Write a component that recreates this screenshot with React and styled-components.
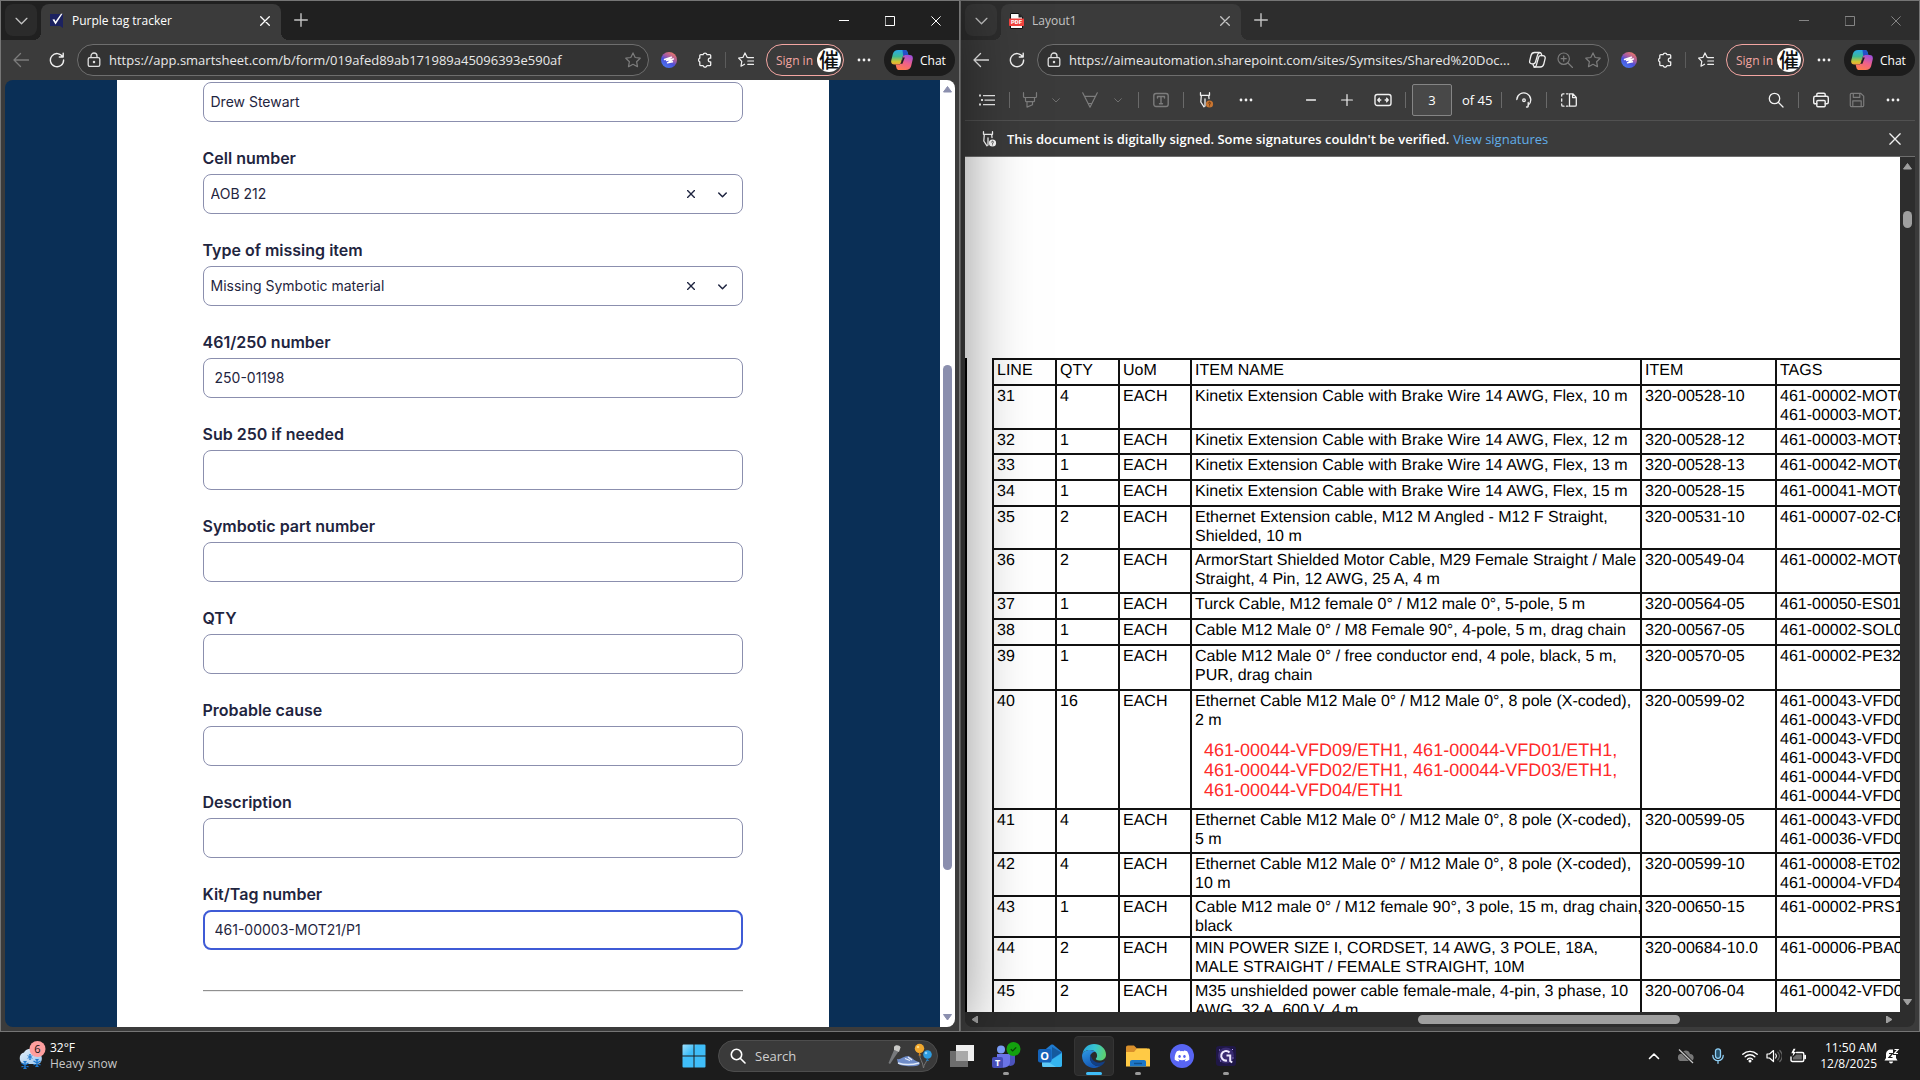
import React from "react";
import styled, { createGlobalStyle, css } from "styled-components";
import { FaDiscord } from "react-icons/fa";

const uiFont = `"Segoe UI", "Open Sans", "Noto Sans", sans-serif`;

const GlobalStyle = createGlobalStyle`
	* {
		box-sizing: border-box;
	}

	body {
		margin: 0;
		background: #1c1c1c;
		font-family: ${uiFont};
		font-size: 12px;
		color: #fff;
	}

	button,
	input,
	select {
		margin: 0;
		padding: 0;
		border: 0;
		background: none;
		color: inherit;
		font: inherit;
		outline: none;
	}

	svg {
		display: block;
		flex: none;
	}
`;

/* ---------- desktop ---------- */

const Desktop = styled.div`
	display: flex;
	flex-direction: column;
	height: 100vh;
	overflow: hidden;
`;

const Windows = styled.main`
	flex: 1;
	min-height: 0;
	display: grid;
	grid-template-columns: 1fr 1fr;
`;

const Window = styled.section`
	position: relative;
	display: flex;
	flex-direction: column;
	min-width: 0;
	min-height: 0;
	border: 1px solid #757575;
	background: #3b3b3b;
	${(p) =>
		p.$active &&
		css`
			z-index: 1;
			box-shadow: 0 0 64px rgba(0, 0, 0, 0.5);
		`}
`;

const WindowBody = styled.div`
	flex: 1;
	min-height: 0;
	margin: 0 4px 4px;
	display: flex;
	flex-direction: column;
	border-radius: 8px;
	overflow: hidden;
`;

/* ---------- browser chrome ---------- */

const TabStrip = styled.div`
	display: flex;
	align-items: flex-end;
	gap: 4px;
	height: 39px;
	padding-left: 4px;
	background: ${(p) => (p.$active ? "#202020" : "#2d2d2d")};
	color: ${(p) => (p.$active ? "#fff" : "#c4c4c4")};
`;

const StripButton = styled.button`
	display: flex;
	align-items: center;
	justify-content: center;
	width: 32px;
	height: 32px;
	margin-bottom: 4px;
	border-radius: 8px;
	background: ${(p) => (p.$filled ? "rgba(255, 255, 255, 0.05)" : "none")};
	color: #c4c4c4;
`;

const Tab = styled.div`
	position: relative;
	display: flex;
	align-items: center;
	width: 240px;
	height: 36px;
	padding: 0 8px 3px;
	border-radius: 8px 8px 0 0;
	background: #3b3b3b;

	&::before,
	&::after {
		content: "";
		position: absolute;
		bottom: 0;
		width: 8px;
		height: 8px;
	}

	&::before {
		left: -8px;
		background: radial-gradient(circle at 0 0, transparent 8px, #3b3b3b 8px);
	}

	&::after {
		right: -8px;
		background: radial-gradient(circle at 100% 0, transparent 8px, #3b3b3b 8px);
	}
`;

const TabTitle = styled.span`
	flex: 1;
	margin-left: 8px;
	line-height: 16px;
`;

const TabClose = styled.button`
	display: flex;
	align-items: center;
	justify-content: center;
	width: 16px;
	height: 16px;
`;

const WindowControls = styled.div`
	display: flex;
	align-self: stretch;
	margin-left: auto;
	color: ${(p) => (p.$active ? "#fff" : "#858585")};
`;

const WindowControl = styled.button`
	display: flex;
	align-items: center;
	justify-content: center;
	width: 46px;
`;

const Toolbar = styled.div`
	display: flex;
	align-items: center;
	gap: 4px;
	height: 40px;
	padding: 0 4px;
`;

const IconButton = styled.button`
	display: flex;
	align-items: center;
	justify-content: center;
	flex: none;
	width: ${(p) => p.$width || 32}px;
	height: 32px;
	color: ${(p) => (p.$dim ? "#7c7c7c" : "#f0f0f0")};
`;

const AddressBar = styled.div`
	flex: 1;
	min-width: 0;
	display: flex;
	align-items: center;
	gap: 4px;
	height: 32px;
	padding-right: 3px;
	border: 1px solid #6e6e6e;
	border-radius: 16px;
	background: #333;
`;

const SiteInfo = styled.button`
	display: flex;
	align-items: center;
	justify-content: center;
	width: 27px;
	margin-left: 2px;
	margin-right: -2px;
	color: #e0e0e0;
`;

const AddressInput = styled.input`
	flex: 1;
	min-width: 0;
	font-size: 13px;
	line-height: 20px;
	color: #e8e8e8;
`;

const ToolbarDivider = styled.span`
	width: 1px;
	height: 16px;
	background: #5c5c5c;
`;

const SignIn = styled.button`
	display: flex;
	align-items: center;
	justify-content: space-between;
	width: 78px;
	height: 32px;
	padding: 0 2px 0 9px;
	border: 1px solid #f3a6a2;
	border-radius: 16px;
	color: #f3a6a2;
`;

const Avatar = styled.span`
	display: flex;
	align-items: center;
	justify-content: center;
	width: 24px;
	height: 24px;
	border-radius: 50%;
	background: #fff;
	color: #111;
	font: 500 20px/24px "Noto Sans CJK SC", sans-serif;
`;

const ChatButton = styled.button`
	display: flex;
	align-items: center;
	gap: 7px;
	width: 71px;
	height: 32px;
	padding-left: 7px;
	border-radius: 16px;
	background: #1c1c1c;
`;

/* ---------- scroll bars ---------- */

const ScrollTrack = styled.div`
	display: flex;
	flex: none;
	align-items: center;
	justify-content: space-between;
	background: ${(p) => (p.$dark ? "#2d2d2d" : "#fff")};
	color: ${(p) => (p.$dark ? "#9f9f9f" : "#8b8fae")};
	${(p) =>
		p.$horizontal
			? "height: 15px; padding: 0 6px;"
			: "width: 15px; padding: 6px 0; flex-direction: column;"}
	${(p) => p.$corner && "margin-bottom: 15px;"}
`;

const ScrollRoom = styled.div`
	flex: ${(p) => p.$share};
`;

const ScrollThumb = styled.div`
	flex: ${(p) => p.$share};
	${(p) => (p.$horizontal ? "height: 9px;" : "width: 9px;")}
	border-radius: 5px;
	background: currentColor;
`;

const arrowPaths = {
	up: "M4.5 0.5 8.5 6H0.5Z",
	down: "M4.5 6 8.5 0.5H0.5Z",
	left: "M1 3.5 6.5 0v7Z",
	right: "M7 3.5 1.5 0v7Z",
};

const ScrollArrow = ({ to }) => (
	<svg width="9" height="7" viewBox="0 0 9 7">
		<path
			d={arrowPaths[to]}
			fill="currentColor"
			stroke="currentColor"
			strokeLinejoin="round"
		/>
	</svg>
);

const ScrollBar = ({ horizontal, dark, corner, before, size, after }) => (
	<ScrollTrack $horizontal={horizontal} $dark={dark} $corner={corner}>
		<ScrollArrow to={horizontal ? "left" : "up"} />
		<ScrollRoom $share={before} />
		<ScrollThumb $horizontal={horizontal} $share={size} />
		<ScrollRoom $share={after} />
		<ScrollArrow to={horizontal ? "right" : "down"} />
	</ScrollTrack>
);

/* ---------- form ---------- */

const FormPane = styled.div`
	flex: 1;
	min-height: 0;
	display: flex;
`;

const FormBackdrop = styled.div`
	flex: 1;
	min-width: 0;
	display: flex;
	justify-content: center;
	background: #0a2f56;
	overflow: hidden;
`;

const Sheet = styled.form`
	flex: 0 1 712px;
	padding: 2px 86px 0;
	background: #fff;
	color: #1f2540;
	font-family: Inter, sans-serif;
	font-size: 14px;
`;

const Field = styled.div`
	display: flex;
	flex-direction: column;
	gap: 4px;
	margin-bottom: 24px;
`;

const Label = styled.label`
	font-size: 16px;
	font-weight: 600;
	line-height: 24px;
`;

const box = css`
	height: 40px;
	border: 1px solid #8b8fae;
	border-radius: 8px;
`;

const TextInput = styled.input`
	${box}
	width: 100%;
	padding: 0 ${(p) => (p.$tight ? 7 : 11)}px 2px;
	${(p) => p.$focused && "border: 2px solid #3f5bd6; padding: 0 10px 2px;"}
`;

const SelectBox = styled.div`
	${box}
	display: flex;
	align-items: center;
	padding: 0 11px 0 7px;
`;

const Select = styled.select`
	flex: 1;
	height: 100%;
	padding-bottom: 2px;
	appearance: none;
`;

const SelectButton = styled.button`
	display: flex;
	align-items: center;
	justify-content: center;
	width: ${(p) => p.$width}px;
	height: 24px;
`;

const Rule = styled.hr`
	height: 2px;
	margin: 40px 0 0;
	border: 0;
	border-top: 1px solid #909090;
	border-bottom: 1px solid #ececec;
`;

/* ---------- pdf viewer ---------- */

const PdfToolbar = styled.div`
	display: grid;
	grid-template-columns: 1fr auto 1fr;
	align-items: center;
	height: 41px;
	padding: 0 6px;
	border-bottom: 1px solid #515151;
`;

const ToolGroup = styled.div`
	display: flex;
	align-items: center;
	justify-content: ${(p) => (p.$end ? "flex-end" : "flex-start")};
	gap: ${(p) => p.$gap || 0}px;
`;

const Separator = styled.span`
	width: 1px;
	height: 16px;
	margin: 0 6px;
	background: #6a6a6a;
`;

const PageInput = styled.input`
	width: 40px;
	height: 32px;
	border: 1px solid #858585;
	border-radius: 2px;
	background: #484848;
	text-align: center;
	font-size: 13px;
`;

const PageCount = styled.span`
	width: 43px;
	padding-left: 10px;
	font-size: 13px;
	white-space: nowrap;
`;

const Notice = styled.div`
	display: flex;
	align-items: center;
	height: 36px;
	padding: 0 4px 0 10px;
	border-bottom: 1px solid #6e6e6e;
	font-size: 13px;
	font-weight: 600;
	white-space: nowrap;
`;

const NoticeText = styled.span`
	margin-left: 8px;
`;

const NoticeLink = styled.a`
	margin-left: 4px;
	margin-right: auto;
	color: #61aee9;
	font-weight: 400;
	text-decoration: none;
`;

const PdfView = styled.div`
	flex: 1;
	min-height: 0;
	display: flex;
	background: #2d2d2d;
`;

const PdfColumn = styled.div`
	flex: 1;
	min-width: 0;
	display: flex;
	flex-direction: column;
`;

const Page = styled.div`
	flex: 1;
	min-height: 0;
	display: flex;
	align-items: flex-start;
	padding-top: 201px;
	background: #fff;
	overflow: hidden;
`;

const PageEdge = styled.div`
	flex: none;
	align-self: stretch;
	width: 2px;
	margin-right: 25px;
	background: #000;
`;

const PartsTable = styled.table`
	flex: none;
	width: 1080px;
	table-layout: fixed;
	border-collapse: collapse;
	color: #000;
	font: 16px/19px "Liberation Sans", Arial, sans-serif;
	text-rendering: geometricPrecision;
`;

const Row = styled.tr`
	height: ${(p) => p.$height}px;
`;

const cell = css`
	padding: 1px 0 0 3px;
	border: 2px solid #111;
	font-weight: 400;
	text-align: left;
	vertical-align: top;
	white-space: pre;
`;

const Cell = styled.td`
	${cell}
`;

const HeadCell = styled.th`
	${cell}
`;

const Annotation = styled.div`
	margin: 10px 0 0 9px;
	color: #ff2a2a;
	font-size: 18px;
	line-height: 20px;
`;

/* ---------- task bar ---------- */

const TaskBar = styled.footer`
	position: relative;
	z-index: 2;
	display: grid;
	grid-template-columns: 1fr auto 1fr;
	align-items: center;
	height: 48px;
	background: #1c1c1c;
	line-height: 16px;
`;

const Weather = styled.button`
	display: flex;
	align-items: center;
	gap: 4px;
	justify-self: start;
	margin-left: 18px;
	text-align: left;
`;

const Muted = styled.div`
	color: #c8c8c8;
`;

const Apps = styled.div`
	display: flex;
	align-items: center;
`;

const AppButton = styled.button`
	position: relative;
	display: flex;
	align-items: center;
	justify-content: center;
	width: 44px;
	height: 48px;
	${(p) =>
		p.$active &&
		css`
			width: 40px;
			height: 40px;
			margin: 0 2px;
			border: 1px solid #353535;
			border-radius: 4px;
			background: #2b2b2b;
		`}
`;

const Indicator = styled.span`
	position: absolute;
	bottom: ${(p) => (p.$active ? 0 : 5)}px;
	width: ${(p) => (p.$active ? 16 : 6)}px;
	height: 3px;
	border-radius: 2px;
	background: ${(p) => (p.$active ? "#3fbdf8" : "#9a9a9a")};
`;

const SearchBox = styled.label`
	display: flex;
	align-items: center;
	width: 220px;
	height: 32px;
	margin: 0 2px;
	padding: 0 5px 0 11px;
	border: 1px solid #4d4d4d;
	border-radius: 16px;
	background: #3a3a3a;
`;

const SearchInput = styled.input`
	flex: 1;
	min-width: 0;
	margin-left: 9px;
	font-size: 13px;

	&::placeholder {
		color: #cfcfcf;
		opacity: 1;
	}
`;

const Tray = styled.div`
	display: flex;
	align-items: center;
	justify-self: end;
	padding-right: 16px;
`;

const TrayButton = styled.button`
	display: flex;
	align-items: center;
	justify-content: center;
	width: ${(p) => p.$width || 32}px;
	height: 40px;
`;

const Clock = styled.button`
	width: 66px;
	padding-right: 3px;
	text-align: right;
	white-space: nowrap;
`;

/* ---------- icons ---------- */

const Line = ({ size = 16, w = 1.2, children, ...rest }) => (
	<svg
		width={size}
		height={size}
		viewBox={`0 0 ${size} ${size}`}
		fill="none"
		stroke="currentColor"
		strokeWidth={w}
		strokeLinecap="round"
		strokeLinejoin="round"
		{...rest}
	>
		{children}
	</svg>
);

const ChevronIcon = ({ size = 12, up, w = 1.2 }) => (
	<Line size={12} w={w} width={size} height={size}>
		<path d={up ? "M1.5 8.5 6 4l4.5 4.5" : "M1 4l5 5 5-5"} />
	</Line>
);

const CrossIcon = ({ size = 10, w = 1.2 }) => (
	<Line size={10} w={w} width={size} height={size}>
		<path d="M.7.7l8.6 8.6M9.3.7.7 9.3" />
	</Line>
);

const PlusIcon = ({ size = 14, w = 1.4 }) => (
	<Line size={14} w={w} width={size} height={size}>
		<path d="M7 .7v12.6M.7 7h12.6" />
	</Line>
);

const BackIcon = () => (
	<Line w={1.3}>
		<path d="M7.5 1.5 1 8l6.5 6.5M1 8h14.5" />
	</Line>
);

const RefreshIcon = () => (
	<Line w={1.4}>
		<path d="M13.8 5A6.6 6.6 0 1 0 14.6 8M14.2 1.2V5h-3.9" />
	</Line>
);

const LockIcon = () => (
	<Line w={1.3}>
		<rect x="2.2" y="5.6" width="11.6" height="8.8" rx="1.6" />
		<path d="M5 5.4V4a3 3 0 0 1 6 0v1.4" />
		<circle cx="8" cy="10" r=".6" fill="currentColor" />
	</Line>
);

const StarIcon = () => (
	<Line w={1.2}>
		<path d="M8 .9l2.2 4.6 5 .7-3.6 3.5.9 5L8 12.3l-4.5 2.4.9-5L.8 6.2l5-.7Z" />
	</Line>
);

const FavoritesIcon = () => (
	<Line w={1.2}>
		<path d="M9.6 5.4H9.2L7 .9 4.9 5.4.6 6l3.2 3.3-.8 4.9 3.6-2M9.8 5.6h5.7M9.8 9h5.7M9.8 12.4h5.7" />
	</Line>
);

const PuzzleIcon = () => (
	<Line w={1.3}>
		<path d="M3.8 2.6h2.3a2 2 0 0 1 3.9 0h2.7c.6 0 1 .4 1 1v2.6h-1a1.9 1.9 0 0 0 0 3.7h1v2.8c0 .6-.4 1-1 1H10a2 2 0 0 1-3.9 0H3.8c-.6 0-1-.4-1-1V9.9a2 2 0 0 1 0-3.7V3.6c0-.6.4-1 1-1Z" />
	</Line>
);

const DotsIcon = () => (
	<svg width="14" height="4" viewBox="0 0 14 4" fill="currentColor">
		<circle cx="2" cy="2" r="1.4" />
		<circle cx="7" cy="2" r="1.4" />
		<circle cx="12" cy="2" r="1.4" />
	</svg>
);

const ExtensionIcon = () => (
	<svg width="16" height="16" viewBox="0 0 16 16">
		<defs>
			<linearGradient id="ext" x1="0.8" y1="0" x2="0.2" y2="1">
				<stop offset="0" stopColor="#f47c62" />
				<stop offset=".4" stopColor="#a05aa8" />
				<stop offset=".6" stopColor="#4a50dc" />
				<stop offset="1" stopColor="#4b7df2" />
			</linearGradient>
		</defs>
		<circle cx="8" cy="8" r="8" fill="url(#ext)" />
		<path
			d="M3.5 7.5 10.5 5.2 5.5 8.5 12.5 7 6.5 10.8 11.5 9.8"
			fill="none"
			stroke="#fff"
			strokeWidth="1.4"
			strokeLinejoin="round"
			strokeLinecap="round"
		/>
	</svg>
);

const CopilotIcon = () => (
	<svg width="22" height="20" viewBox="0 0 22 20">
		<defs>
			<linearGradient id="copA" x1="0" y1="0" x2="0" y2="1">
				<stop offset="0" stopColor="#2aa8ea" />
				<stop offset=".45" stopColor="#3fb994" />
				<stop offset=".8" stopColor="#d2c62f" />
				<stop offset="1" stopColor="#f2a53a" />
			</linearGradient>
			<linearGradient id="copB" x1=".7" y1="0" x2=".3" y2="1">
				<stop offset="0" stopColor="#a04fd8" />
				<stop offset=".5" stopColor="#f0608a" />
				<stop offset="1" stopColor="#ff7d4d" />
			</linearGradient>
		</defs>
		<path
			d="M7.2 0h6.6c1.4 0 2.3.8 2.7 2.1l.9 3h-3.2c-1.4 0-2.2.8-2.6 2.1l-1.8 5.6c-.4 1.2-1.1 1.8-2.3 1.8H3.3C.9 14.6-.3 12.8.3 10.3l1.6-6.5C2.6 1.4 4.4 0 7.2 0Z"
			fill="url(#copA)"
		/>
		<path d="M11.5 0h2.3c1.4 0 2.3.8 2.7 2.1l.9 3h-3.2c-.9 0-1.6.4-2 1Z" fill="#2350c8" />
		<path
			d="M14.8 20H8.2c-1.4 0-2.3-.8-2.7-2.1l-.9-3.3h3c1.3 0 2-.6 2.4-1.8l1.8-5.6c.4-1.3 1.2-2.1 2.6-2.1h4.3c2.4 0 3.6 1.8 3 4.3l-1.6 6.8c-.7 2.4-2.5 3.8-5.3 3.8Z"
			fill="url(#copB)"
		/>
		<path d="M12 7.5h1.8l-2.4 6.2H9.6Z" fill="#1c1c1c" />
	</svg>
);

const CopilotOutlineIcon = () => (
	<Line size={18} w={1.3}>
		<path d="M6.5 1.5h5c1 0 1.6.5 1.9 1.5l.5 1.7h1c1.8 0 2.6 1.3 2.2 3l-1.3 5.3c-.5 1.9-1.6 3-3.5 3h-5c-1 0-1.6-.5-1.9-1.5l-.5-1.7h-1c-1.8 0-2.6-1.3-2.2-3L3 4.5c.5-1.9 1.6-3 3.5-3Z" />
		<path d="M11.8 1.6C10.5 1.7 10 2.5 9.7 3.6L7.5 11c-.3 1.2-1 1.8-2.2 1.8M6.2 16.4c1.3-.1 1.8-.9 2.1-2L10.5 6.5c.3-1.2 1-1.8 2.2-1.8h1.2" />
	</Line>
);

const ZoomIcon = () => (
	<Line w={1.2}>
		<circle cx="6.7" cy="6.7" r="5.7" />
		<path d="M11 11l4.5 4.5M4.2 6.7h5M6.7 4.2v5" />
	</Line>
);

const TaskIcon = () => (
	<svg width="15" height="16" viewBox="0 0 15 16">
		<path d="M1 1h13v14l-3-2H1Z" fill="#1c2260" />
		<path d="M3.5 6.5 6.5 11.5 13.5.8 12 .8 6.5 8.5 5.5 6.2Z" fill="#fff" />
	</svg>
);

const PdfIcon = () => (
	<svg width="15" height="16" viewBox="0 0 15 16">
		<path d="M1.5.5h8.5l3.5 3.5v11.5h-12Z" fill="#fff" stroke="#111" />
		<path d="M9.5 0 14 4.5H9.5Z" fill="#222" />
		<rect y="5.5" width="15" height="7.5" rx=".8" fill="#f4433f" />
		<text
			x="7.5"
			y="11.3"
			textAnchor="middle"
			fill="#fff"
			fontFamily="Roboto, sans-serif"
			fontWeight="900"
			fontSize="6"
		>
			PDF
		</text>
	</svg>
);

const ListIcon = () => (
	<svg width="16" height="12" viewBox="0 0 16 12" fill="currentColor">
		<path d="M4 1h12v1.3H4ZM5.5 5.5H16v1.3H5.5ZM4 10h12v1.3H4ZM0 .6h2v2H0ZM2 5h2v2H2ZM0 9.6h2v2H0Z" />
	</svg>
);

const HighlighterIcon = () => (
	<Line w={1.2}>
		<path d="M1.5.7v3.8c0 .6.4 1 1 1h11c.6 0 1-.4 1-1V.7M3.5 5.7v3c0 .6.3 1 .9 1h7.2c.6 0 .9-.4.9-1v-3M5 9.9v5.2l5.5-2.3V9.9" />
	</Line>
);

const PenIcon = () => (
	<Line w={1.2}>
		<path d="M.7.8 8 15.2 15.3.8M2.5 4.3h11M6.2 11.5 8 15.2l1.8-3.7Z" />
	</Line>
);

const TextIcon = () => (
	<Line w={1.4}>
		<rect x=".8" y="1.5" width="14.4" height="13" rx="2.2" />
		<path d="M4.5 6V4.5h7V6M8 4.5v7.3M6.5 11.8h3" />
	</Line>
);

const SignatureIcon = ({ badge = "#c87531", mark = "#5a2c08" }) => (
	<Line w={1.3}>
		<path d="M2.5.7v2.6M11.5.7v2.6M2.5 3.3h9M3.3 3.5l-.5 6.5L6 14.8M10.7 3.5l.3 3M7 7v7" />
		<circle cx="11.5" cy="12" r="3.6" fill={badge} stroke="none" />
		<path d="M10.5 11c.2-1.2 2-1 1.9.1-.1.6-.9.7-.9 1.4M11.5 13.8v.1" stroke={mark} strokeWidth=".9" />
	</Line>
);

const FitIcon = () => (
	<Line size={18} w={1.4}>
		<rect x="1" y="3.5" width="16" height="11" rx="2.2" />
		<path d="M6.8 9H4.2M5.4 7.3 3.8 9l1.6 1.7M11.2 9h2.6M12.6 7.3 14.2 9l-1.6 1.7" />
	</Line>
);

const RotateIcon = () => (
	<Line w={1.3}>
		<path d="M.8 7.5A7 7 0 1 1 12 13.5M12.2 10.5v3.7c0 .5-.3.8-.8.8H10.5" />
		<circle cx="8" cy="8.2" r="1.3" />
	</Line>
);

const PageViewIcon = () => (
	<Line w={1.3}>
		<path d="M7 1.8H5.5M3 1.8H2A1.3 1.3 0 0 0 .7 3.1V4M.7 6.8v2.4M.7 12v1c0 .7.6 1.2 1.3 1.2h1M5.5 14.2H7" />
		<path d="M8.5 1.8h3.3l3.5 3.6v7.5c0 .7-.6 1.3-1.3 1.3H8.5ZM11.6 2v3.6h3.5" />
	</Line>
);

const SearchIcon = ({ w = 1.3 }) => (
	<Line w={w}>
		<circle cx="6.5" cy="6.5" r="5.2" />
		<path d="M10.5 10.5 15 15" />
	</Line>
);

const PrintIcon = () => (
	<Line w={1.4}>
		<path d="M3.8 4.2V2.5c0-.8.6-1.3 1.3-1.3h5.8c.7 0 1.3.5 1.3 1.3v1.7M3.8 11.8H2.2c-.9 0-1.5-.6-1.5-1.5V6c0-1 .7-1.7 1.7-1.7h11.2c1 0 1.7.7 1.7 1.7v4.3c0 .9-.6 1.5-1.5 1.5h-1.6" />
		<rect x="3.8" y="8.5" width="8.4" height="6.2" rx="1" />
	</Line>
);

const SaveIcon = () => (
	<Line w={1.2}>
		<path d="M2.5 1.3h9.3l2.9 2.9v9.3c0 .7-.5 1.2-1.2 1.2h-11c-.7 0-1.2-.5-1.2-1.2v-11c0-.7.5-1.2 1.2-1.2ZM4.3 1.5v3.8h6.5V1.5M3.8 14.5V8.8h8.4v5.7" />
	</Line>
);

const flake = "M0-4V4M-3.5-2 3.5 2M-3.5 2 3.5-2M-1.5-3.7 0-2.5 1.5-3.7M-1.5 3.7 0 2.5 1.5 3.7";

const SnowIcon = () => (
	<svg width="28" height="32" viewBox="0 0 28 32">
		<defs>
			<linearGradient id="cloud" x1="0" y1="0" x2="1" y2="1">
				<stop offset="0" stopColor="#e4f1fb" />
				<stop offset="1" stopColor="#9cc6ee" />
			</linearGradient>
		</defs>
		<path
			d="M6 24a6 6 0 0 1 0-11.5C7.5 8 17 7 19 12.5c6 0 7 11.5 0 11.5Z"
			fill="url(#cloud)"
		/>
		<g stroke="#1c78d0" strokeWidth="1.3" fill="none">
			<path d={flake} transform="translate(12 17) scale(.7)" />
			<path d={flake} transform="translate(7 25)" />
			<path d={flake} transform="translate(19 23)" />
		</g>
		<circle cx="19.5" cy="9" r="8" fill="#ff9f9f" />
		<text x="19.5" y="13" textAnchor="middle" fontSize="11" fill="#111">
			6
		</text>
	</svg>
);

const StartIcon = () => (
	<svg width="24" height="24" viewBox="0 0 24 24">
		<defs>
			<linearGradient id="start" x1="0" y1="0" x2=".7" y2=".7">
				<stop offset="0" stopColor="#9fe0fc" />
				<stop offset=".5" stopColor="#3fbdf8" />
			</linearGradient>
		</defs>
		<path
			d="M1.5.5H11.5V11.5H.5V1.5a1 1 0 0 1 1-1ZM12.5.5h10a1 1 0 0 1 1 1v10h-11ZM.5 12.5h11v11h-10a1 1 0 0 1-1-1ZM12.5 12.5h11v10a1 1 0 0 1-1 1h-10Z"
			fill="url(#start)"
		/>
	</svg>
);

const PartyIcon = () => (
	<svg width="44" height="26" viewBox="0 0 44 26">
		<path d="M6 7 10.5 8.5 2 21 .5 20Z" fill="#77797c" />
		<path d="M6 4c1-2.5 6-2 6.5.5L11 9 6 7Z" fill="#c9c9c6" />
		<path
			d="M9 16c3 1 7-3 11-3 4 1 6 5 11 6 2 1 0 4-3 4-8 .5-16 0-18-2.5Z"
			fill="#6f8cc8"
		/>
		<path d="M10 20c6 2 14 2 21 0" stroke="#dfe8f6" strokeWidth="1.5" fill="none" />
		<path d="M17 15.5l5 2M20 14l4 3" stroke="#e8eefa" strokeWidth="1.2" />
		<path d="M31.5 11c0 5 3.5 8 4 14M39 17c-1 3-3 4-3.5 8" stroke="#777" fill="none" />
		<circle cx="31.5" cy="5.5" r="4.7" fill="#f0a72e" />
		<path d="M30.5 12.5 31.5 9l1.5 3.5Z" fill="#d8861c" />
		<circle cx="30" cy="4" r="1.3" fill="#ffd981" />
		<circle cx="39.5" cy="11.5" r="4.3" fill="#2f9de0" />
		<path d="M38 18 39.3 15 41 18Z" fill="#2078b8" />
		<circle cx="38" cy="10" r="1.3" fill="#8fd3fa" />
	</svg>
);

const TaskViewIcon = () => (
	<svg width="24" height="22" viewBox="0 0 24 22">
		<path d="M6 0h18v16H6Z" fill="#efefef" />
		<path d="M0 6h18v16H0Z" fill="#777" fillOpacity=".9" />
		<path d="M6 6h12v10H6Z" fill="#a9a9a9" />
	</svg>
);

const TeamsIcon = () => (
	<svg width="30" height="30" viewBox="0 0 30 30">
		<circle cx="10" cy="8.5" r="4" fill="#7a9cf5" />
		<path d="M17 12.5h7v8c0 4-5 6-8 3Z" fill="#4b53bc" />
		<path d="M6 13h13v8c0 7.5-13 7.5-13 0Z" fill="#6a74e8" />
		<rect x="1" y="16" width="11" height="11" rx="2" fill="#464eb8" />
		<text
			x="6.5"
			y="25"
			textAnchor="middle"
			fontSize="9"
			fontWeight="700"
			fill="#fff"
		>
			T
		</text>
		<circle cx="22.5" cy="8" r="7" fill="#13a10e" />
		<path d="M19.8 8.2 21.7 10 25.2 6.3" fill="none" stroke="#0b4208" strokeWidth="1.2" />
	</svg>
);

const OutlookIcon = () => (
	<svg width="26" height="24" viewBox="0 0 26 24">
		<path d="M4 9 14 .8c.8-.5 1.5-.5 2.3 0L25 8v13c0 1-.7 2-2 2H6Z" fill="#1f7bd0" />
		<path d="M15 3l9.5 5.5L15 15Z" fill="#155a9e" />
		<path d="M25 9v12c0 1.3-.8 2-2 2H6l-1-1Z" fill="#35b5f0" />
		<path d="M5 14l14 9H7a2 2 0 0 1-2-2Z" fill="#5cc9f7" />
		<rect x="1" y="5" width="13.5" height="13.5" rx="2" fill="#1462b8" />
		<text
			x="7.7"
			y="15.7"
			textAnchor="middle"
			fontSize="11"
			fontWeight="700"
			fill="#fff"
		>
			O
		</text>
	</svg>
);

const EdgeIcon = () => (
	<svg width="24" height="24" viewBox="0 0 24 24">
		<defs>
			<linearGradient id="edgeTop" x1="0" y1=".3" x2="1" y2=".5">
				<stop offset="0" stopColor="#2aa6e0" />
				<stop offset=".5" stopColor="#37c6d0" />
				<stop offset="1" stopColor="#5ed06c" />
			</linearGradient>
			<linearGradient id="edgeSide" x1="0" y1="0" x2=".4" y2="1">
				<stop offset="0" stopColor="#2e9be4" />
				<stop offset="1" stopColor="#1557b4" />
			</linearGradient>
		</defs>
		<path
			d="M.3 10.5C1.5 4 6 0 12 0c7 0 12 5 12 10.5 0 4-3 6-6.5 6-2.8 0-4-1-3.6-1.9.7-.9 1.2-1.8 1.2-3.2C15.1 8 11.5 6 8 6 4 6 1 8 .3 10.5Z"
			fill="url(#edgeTop)"
		/>
		<path
			d="M0 12C0 8.5 3.5 6 8 6c2.5 0 4.5.9 5.7 2.2C11.5 7.6 8 9.5 8 13.5c0 5 4.5 9.5 10.5 8.5A12 12 0 0 1 0 12Z"
			fill="url(#edgeSide)"
		/>
		<path
			d="M8.8 10.5C8 12 7.7 13.5 8 15c.8 4.5 5 7.5 10.5 7 2-1 3.5-2.5 4.3-4 .3-.6-.2-.8-.7-.5-5.5 2.8-12.6.6-13.3-7Z"
			fill="#123f86"
		/>
	</svg>
);

const FolderIcon = () => (
	<svg width="26" height="24" viewBox="0 0 26 24">
		<path d="M1 3.5C1 2.3 1.6 1.5 3 1.5h6l3 3h10v4H1Z" fill="#d98f2b" />
		<path d="M1 8h8l3-3.5h11.5c1 0 1.5.6 1.5 1.5v16.5H1Z" fill="#ffca45" />
		<path d="M5 22.5V18c0-1.3.8-2 2-2h12c1.2 0 2 .7 2 2v4.5Z" fill="#1c77c8" />
		<path d="M9 19.5h8" stroke="#10508c" strokeWidth="1.5" />
	</svg>
);

const DiscordBadge = styled.span`
	display: flex;
	align-items: center;
	justify-content: center;
	width: 24px;
	height: 24px;
	border-radius: 50%;
	background: #5865f2;
	font-size: 16px;
`;

const GBadge = () => (
	<svg width="20" height="20" viewBox="0 0 20 20">
		<rect width="20" height="20" rx="3" fill="#1f1747" />
		<circle cx="10" cy="9.5" r="8" fill="#6a4fc0" fillOpacity=".35" />
		<path
			d="M13.5 6.5A4.8 4.8 0 1 0 11 14.5M10.5 9.5h3.7V15l2 1.5"
			fill="none"
			stroke="#efeaff"
			strokeWidth="2"
		/>
		<path d="M3 4h1M16 3.5h1M4 15h1M16.5 12h1" stroke="#b9a5ff" />
	</svg>
);

const CloudOffIcon = () => (
	<svg width="18" height="16" viewBox="0 0 18 16">
		<path d="M4.5 13a3.6 3.6 0 0 1 0-7.2C6 1.5 12 1.5 13 6c5 0 4.5 7 1 7Z" fill="#777" />
		<path d="M2 1l14 14" stroke="#1c1c1c" strokeWidth="3" />
		<path d="M2 1.5l14 13.5" stroke="#c9c9c9" strokeWidth="1.2" />
	</svg>
);

const MicIcon = () => (
	<Line w={1.3} color="#8fcff5">
		<rect x="5.5" y=".8" width="5" height="9.5" rx="2.5" fill="#27536e" />
		<path d="M2.8 7.5a5.2 5.2 0 0 0 10.4 0M8 12.8v2.5" />
	</Line>
);

const WifiIcon = () => (
	<Line w={1.4}>
		<path d="M.8 6.2a10.5 10.5 0 0 1 14.4 0M3.2 8.7a7 7 0 0 1 9.6 0M5.5 11.2a3.8 3.8 0 0 1 5 0" />
		<circle cx="8" cy="13" r=".8" fill="currentColor" />
	</Line>
);

const SpeakerIcon = () => (
	<Line w={1.2}>
		<path d="M1 6v4h2.5L7.5 13.5v-11L3.5 6ZM9.7 6c.9 1.2.9 2.8 0 4" />
		<path d="M11.8 4.2c2 2.2 2 5.4 0 7.6M13.8 2.5c3 3.3 3 7.7 0 11" stroke="#666" />
	</Line>
);

const BatteryIcon = () => (
	<Line w={1.4}>
		<path d="M6.5 4.5h5.8c1 0 1.5.6 1.5 1.5v6c0 1-.5 1.5-1.5 1.5H2.5c-1 0-1.5-.5-1.5-1.5V9M15.3 7.5v3" />
		<path d="M3 11.5V9.5L6.5 6.5h5.3v5Z" fill="currentColor" fillOpacity=".35" stroke="none" />
		<path d="M3.5.8 1.3 5.2h2L2.5 8.5 6 4H4L5.5.8Z" fill="currentColor" stroke="none" />
	</Line>
);

const BellIcon = () => (
	<svg width="16" height="16" viewBox="0 0 16 16">
		<path
			d="M7 1.5c-3 0-5 2-5 5V10L.5 12.5h13L12 10V7H9V1.5ZM5 13.5a2 2 0 0 0 4 0Z"
			fill="#fff"
		/>
		<path d="M10.5 1.5h3.5l-3.5 4h3.5" fill="none" stroke="#fff" strokeWidth="1.2" />
		<path d="M5 5.5h3.5L5 9.5h3.5" fill="none" stroke="#1c1c1c" strokeWidth="1.2" />
	</svg>
);

/* ---------- parts ---------- */

const Browser = ({ active, icon, title, url, canGoBack, actions, children }) => (
	<Window $active={active}>
		<TabStrip $active={active}>
			<StripButton $filled aria-label="Tab actions">
				<ChevronIcon size={13} />
			</StripButton>
			<Tab>
				{icon}
				<TabTitle>{title}</TabTitle>
				<TabClose aria-label="Close tab">
					<CrossIcon w={1.3} />
				</TabClose>
			</Tab>
			<StripButton aria-label="New tab">
				<PlusIcon />
			</StripButton>
			<WindowControls $active={active}>
				<WindowControl aria-label="Minimize">
					<Line size={10} w={1}>
						<path d="M0 4.5h10" />
					</Line>
				</WindowControl>
				<WindowControl aria-label="Maximize">
					<Line size={10} w={1}>
						<rect x=".5" y=".5" width="9" height="9" />
					</Line>
				</WindowControl>
				<WindowControl aria-label="Close">
					<CrossIcon w={1} />
				</WindowControl>
			</WindowControls>
		</TabStrip>
		<Toolbar>
			<IconButton $dim={!canGoBack} aria-label="Back">
				<BackIcon />
			</IconButton>
			<IconButton aria-label="Refresh">
				<RefreshIcon />
			</IconButton>
			<AddressBar>
				<SiteInfo aria-label="View site information">
					<LockIcon />
				</SiteInfo>
				<AddressInput aria-label="Address" defaultValue={url} />
				{actions}
				<IconButton $width={24} $dim aria-label="Add to favorites">
					<StarIcon />
				</IconButton>
			</AddressBar>
			<IconButton aria-label="Extension">
				<ExtensionIcon />
			</IconButton>
			<IconButton aria-label="Extensions">
				<PuzzleIcon />
			</IconButton>
			<ToolbarDivider />
			<IconButton aria-label="Favorites">
				<FavoritesIcon />
			</IconButton>
			<SignIn>
				Sign in
				<Avatar>催</Avatar>
			</SignIn>
			<IconButton aria-label="Settings and more">
				<DotsIcon />
			</IconButton>
			<ChatButton>
				<CopilotIcon />
				Chat
			</ChatButton>
		</Toolbar>
		<WindowBody>{children}</WindowBody>
	</Window>
);

const SelectField = ({ id, label, value }) => (
	<Field>
		<Label htmlFor={id}>{label}</Label>
		<SelectBox>
			<Select id={id} defaultValue={value}>
				<option>{value}</option>
			</Select>
			<SelectButton type="button" $width={48} aria-label={`Clear ${label}`}>
				<CrossIcon size={8} w={1.7} />
			</SelectButton>
			<SelectButton type="button" $width={16} aria-label={`Open ${label}`}>
				<ChevronIcon size={9} w={2} />
			</SelectButton>
		</SelectBox>
	</Field>
);

const textFields = [
	{ id: "number", label: "461/250 number", value: "250-01198" },
	{ id: "sub", label: "Sub 250 if needed" },
	{ id: "part", label: "Symbotic part number" },
	{ id: "qty", label: "QTY" },
	{ id: "cause", label: "Probable cause" },
	{ id: "description", label: "Description" },
	{ id: "kit", label: "Kit/Tag number", value: "461-00003-MOT21/P1", focused: true },
];

const TrackerForm = () => (
	<FormPane>
		<FormBackdrop>
			<Sheet>
				<Field>
					<TextInput $tight aria-label="Name" defaultValue="Drew Stewart" />
				</Field>
				<SelectField id="cell" label="Cell number" value="AOB 212" />
				<SelectField
					id="type"
					label="Type of missing item"
					value="Missing Symbotic material"
				/>
				{textFields.map(({ id, label, value, focused }) => (
					<Field key={id}>
						<Label htmlFor={id}>{label}</Label>
						<TextInput id={id} defaultValue={value} $focused={focused} />
					</Field>
				))}
				<Rule />
			</Sheet>
		</FormBackdrop>
		<ScrollBar before={272} size={505} after={144} />
	</FormPane>
);

const columns = [63, 63, 72, 450, 135, 297];
const headings = ["LINE", "QTY", "UoM", "ITEM NAME", "ITEM", "TAGS"];

const parts = [
	[44, 31, 4, "Kinetix Extension Cable with Brake Wire 14 AWG, Flex, 10 m", "320-00528-10", "461-00002-MOT01/P1,\n461-00003-MOT21/P1"],
	[25, 32, 1, "Kinetix Extension Cable with Brake Wire 14 AWG, Flex, 12 m", "320-00528-12", "461-00003-MOT51/P1"],
	[26, 33, 1, "Kinetix Extension Cable with Brake Wire 14 AWG, Flex, 13 m", "320-00528-13", "461-00042-MOT01/P1"],
	[26, 34, 1, "Kinetix Extension Cable with Brake Wire 14 AWG, Flex, 15 m", "320-00528-15", "461-00041-MOT01/P1"],
	[43, 35, 2, "Ethernet Extension cable, M12 M Angled - M12 F Straight,\nShielded, 10 m", "320-00531-10", "461-00007-02-CP01"],
	[44, 36, 2, "ArmorStart Shielded Motor Cable, M29 Female Straight / Male\nStraight, 4 Pin, 12 AWG, 25 A, 4 m", "320-00549-04", "461-00002-MOT01/P1"],
	[26, 37, 1, "Turck Cable, M12 female 0° / M12 male 0°, 5-pole, 5 m", "320-00564-05", "461-00050-ES01"],
	[26, 38, 1, "Cable M12 Male 0° / M8 Female 90°, 4-pole, 5 m, drag chain", "320-00567-05", "461-00002-SOL01"],
	[45, 39, 1, "Cable M12 Male 0° / free conductor end, 4 pole, black, 5 m,\nPUR, drag chain", "320-00570-05", "461-00002-PE32"],
	[119, 40, 16, "Ethernet Cable M12 Male 0° / M12 Male 0°, 8 pole (X-coded),\n2 m", "320-00599-02", "461-00043-VFD01\n461-00043-VFD02\n461-00043-VFD03\n461-00043-VFD04\n461-00044-VFD05\n461-00044-VFD06", "461-00044-VFD09/ETH1, 461-00044-VFD01/ETH1,\n461-00044-VFD02/ETH1, 461-00044-VFD03/ETH1,\n461-00044-VFD04/ETH1"],
	[44, 41, 4, "Ethernet Cable M12 Male 0° / M12 Male 0°, 8 pole (X-coded),\n5 m", "320-00599-05", "461-00043-VFD01\n461-00036-VFD01"],
	[43, 42, 4, "Ethernet Cable M12 Male 0° / M12 Male 0°, 8 pole (X-coded),\n10 m", "320-00599-10", "461-00008-ET02/P1\n461-00004-VFD41"],
	[41, 43, 1, "Cable M12 male 0° / M12 female 90°, 3 pole, 15 m, drag chain,\nblack", "320-00650-15", "461-00002-PRS11"],
	[43, 44, 2, "MIN POWER SIZE I, CORDSET, 14 AWG, 3 POLE, 18A,\nMALE STRAIGHT / FEMALE STRAIGHT, 10M", "320-00684-10.0", "461-00006-PBA01"],
	[44, 45, 2, "M35 unshielded power cable female-male, 4-pin, 3 phase, 10\nAWG, 32 A, 600 V, 4 m", "320-00706-04", "461-00042-VFD01"],
];

const PartsList = () => (
	<PartsTable>
		<colgroup>
			{columns.map((width, i) => (
				<col key={i} width={width} />
			))}
		</colgroup>
		<thead>
			<Row $height={26}>
				{headings.map((text) => (
					<HeadCell key={text}>{text}</HeadCell>
				))}
			</Row>
		</thead>
		<tbody>
			{parts.map(([height, line, qty, name, item, tags, note]) => (
				<Row key={line} $height={height}>
					<Cell>{line}</Cell>
					<Cell>{qty}</Cell>
					<Cell>EACH</Cell>
					<Cell>
						{name}
						{note && <Annotation>{note}</Annotation>}
					</Cell>
					<Cell>{item}</Cell>
					<Cell>{tags}</Cell>
				</Row>
			))}
		</tbody>
	</PartsTable>
);

const PdfViewer = () => (
	<>
		<PdfToolbar>
			<ToolGroup $gap={8}>
				<ToolGroup>
					<IconButton aria-label="Contents">
						<ListIcon />
					</IconButton>
					<Separator />
					<IconButton $width={28} $dim aria-label="Highlight">
						<HighlighterIcon />
					</IconButton>
					<IconButton $width={24} $dim aria-label="Highlight options">
						<ChevronIcon size={8} />
					</IconButton>
				</ToolGroup>
				<ToolGroup>
					<IconButton $width={28} $dim aria-label="Draw">
						<PenIcon />
					</IconButton>
					<IconButton $width={28} $dim aria-label="Draw options">
						<ChevronIcon size={8} />
					</IconButton>
					<Separator />
					<IconButton $dim aria-label="Add text">
						<TextIcon />
					</IconButton>
					<Separator />
					<IconButton aria-label="Signatures">
						<SignatureIcon />
					</IconButton>
				</ToolGroup>
				<IconButton aria-label="More tools">
					<DotsIcon />
				</IconButton>
			</ToolGroup>
			<ToolGroup>
				<ToolGroup $gap={4}>
					<IconButton aria-label="Zoom out">
						<Line size={10} w={1.4}>
							<path d="M.5 5h9" />
						</Line>
					</IconButton>
					<IconButton aria-label="Zoom in">
						<PlusIcon size={12} w={1.4} />
					</IconButton>
					<IconButton aria-label="Fit to width">
						<FitIcon />
					</IconButton>
				</ToolGroup>
				<Separator />
				<PageInput aria-label="Page" defaultValue="3" />
				<PageCount>of 45</PageCount>
				<Separator />
				<IconButton aria-label="Rotate">
					<RotateIcon />
				</IconButton>
				<Separator />
				<IconButton aria-label="Page view">
					<PageViewIcon />
				</IconButton>
			</ToolGroup>
			<ToolGroup $end $gap={4}>
				<ToolGroup>
					<IconButton aria-label="Find">
						<SearchIcon />
					</IconButton>
					<Separator />
					<IconButton aria-label="Print">
						<PrintIcon />
					</IconButton>
				</ToolGroup>
				<IconButton $dim aria-label="Save">
					<SaveIcon />
				</IconButton>
				<IconButton aria-label="More options">
					<DotsIcon />
				</IconButton>
			</ToolGroup>
		</PdfToolbar>
		<Notice>
			<Line size={24} w={1.3} color="#fff" viewBox="-6 -4 24 24">
				<SignatureIcon badge="#fff" mark="#3b3b3b" />
			</Line>
			<NoticeText>
				This document is digitally signed. Some signatures couldn't be verified.
			</NoticeText>
			<NoticeLink href="#signatures">View signatures</NoticeLink>
			<IconButton aria-label="Dismiss">
				<CrossIcon size={12} w={1.1} />
			</IconButton>
		</Notice>
		<PdfView>
			<PdfColumn>
				<Page>
					<PageEdge />
					<PartsList />
				</Page>
				<ScrollBar horizontal dark before={438} size={262} after={205} />
			</PdfColumn>
			<ScrollBar dark corner before={41} size={17} after={771} />
		</PdfView>
	</>
);

const apps = [
	{ name: "Task View", icon: <TaskViewIcon /> },
	{ name: "Microsoft Teams", icon: <TeamsIcon />, open: true },
	{ name: "Outlook", icon: <OutlookIcon /> },
	{ name: "Microsoft Edge", icon: <EdgeIcon />, open: true, active: true },
	{ name: "File Explorer", icon: <FolderIcon />, open: true },
	{
		name: "Discord",
		icon: (
			<DiscordBadge>
				<FaDiscord />
			</DiscordBadge>
		),
	},
	{ name: "G", icon: <GBadge />, open: true },
];

const SystemBar = () => (
	<TaskBar>
		<Weather>
			<SnowIcon />
			<div>
				32°F
				<Muted>Heavy snow</Muted>
			</div>
		</Weather>
		<Apps>
			<AppButton aria-label="Start">
				<StartIcon />
			</AppButton>
			<SearchBox>
				<SearchIcon w={1.6} />
				<SearchInput placeholder="Search" aria-label="Search" />
				<PartyIcon />
			</SearchBox>
			{apps.map(({ name, icon, open, active }) => (
				<AppButton key={name} aria-label={name} $active={active}>
					{icon}
					{open && <Indicator $active={active} />}
				</AppButton>
			))}
		</Apps>
		<Tray>
			<TrayButton aria-label="Show hidden icons">
				<ChevronIcon size={12} up w={1.6} />
			</TrayButton>
			<TrayButton aria-label="OneDrive">
				<CloudOffIcon />
			</TrayButton>
			<TrayButton aria-label="Microphone">
				<MicIcon />
			</TrayButton>
			<TrayButton aria-label="Network">
				<WifiIcon />
			</TrayButton>
			<TrayButton $width={16} aria-label="Volume">
				<SpeakerIcon />
			</TrayButton>
			<TrayButton aria-label="Battery">
				<BatteryIcon />
			</TrayButton>
			<Clock>
				11:50 AM
				<br />
				12/8/2025
			</Clock>
			<TrayButton $width={24} aria-label="Notifications">
				<BellIcon />
			</TrayButton>
		</Tray>
	</TaskBar>
);

const App = () => (
	<>
		<GlobalStyle />
		<Desktop>
			<Windows>
				<Browser
					active
					icon={<TaskIcon />}
					title="Purple tag tracker"
					url="https://app.smartsheet.com/b/form/019afed89ab171989a45096393e590af"
				>
					<TrackerForm />
				</Browser>
				<Browser
					canGoBack
					icon={<PdfIcon />}
					title="Layout1"
					url="https://aimeautomation.sharepoint.com/sites/Symsites/Shared%20Doc..."
					actions={
						<>
							<IconButton $width={24} aria-label="Copilot">
								<CopilotOutlineIcon />
							</IconButton>
							<IconButton $width={24} $dim aria-label="Zoom">
								<ZoomIcon />
							</IconButton>
						</>
					}
				>
					<PdfViewer />
				</Browser>
			</Windows>
			<SystemBar />
		</Desktop>
	</>
);

export default App;
